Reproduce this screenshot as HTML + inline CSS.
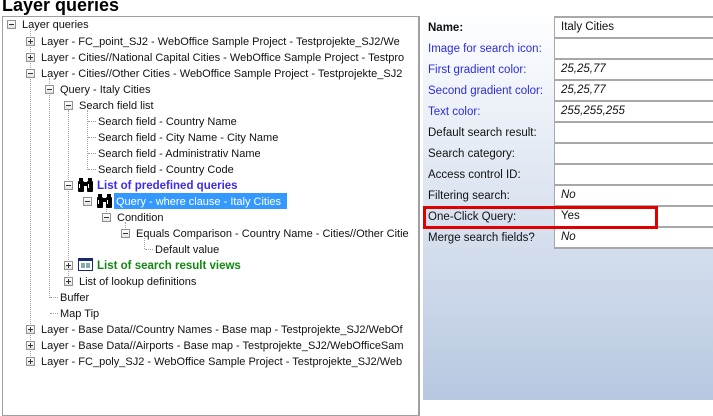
<!DOCTYPE html>
<html><head><meta charset="utf-8"><style>
*{margin:0;padding:0;box-sizing:border-box}
body{width:713px;height:400px;overflow:hidden;background:#fff;font-family:"Liberation Sans",Tahoma,sans-serif;font-size:11px;color:#111;position:relative}
.title{position:absolute;left:2px;top:-5px;font-size:18px;font-weight:bold;color:#000}
.tree{position:absolute;left:2px;top:16px;width:418px;height:400px;border:1px solid #a0a0a0;border-right:2px solid #a0a0a0;background:#fff}
.clip{position:absolute;left:0;top:0;width:418px;height:400px;overflow:hidden}
.r{position:absolute;white-space:nowrap;height:16px;line-height:16px;padding-top:1px}
.ex{position:absolute;width:9px;height:9px;border:1px solid #919191;background:linear-gradient(#fff,#e4e4e4)}
.ex:before{content:"";position:absolute;left:1px;top:3px;width:5px;height:1px;background:#333}
.ex.p:after{content:"";position:absolute;left:3px;top:1px;width:1px;height:5px;background:#333}
.vl{position:absolute;width:0;border-left:1px dotted #a0a0a0}
.hl{position:absolute;height:0;border-top:1px dotted #a0a0a0}
.sel{background:#3399ff;color:#fff;padding:1px 2px 0}
.prop{position:absolute;left:423px;top:16px;width:290px;height:384px;background:linear-gradient(#fdfeff,#b8c8e1)}
.lab{position:absolute;left:428px;white-space:nowrap;line-height:16px;font-size:11.5px;padding-top:1px}
.blue{color:#2b2bdc}
.cell{position:absolute;left:554px;width:159px;height:21px;background:#fff;border-left:1px solid #a8a8a8;border-top:2px solid #a8a8a8;padding-left:6px;line-height:19px;font-size:11.5px}
.it{font-style:italic}
.red{position:absolute;left:423px;top:206px;width:235px;height:23px;border:3px solid #e00000}
svg{position:absolute}
</style></head><body>
<div class="title">Layer queries</div>
<div class="tree"></div>
<div class="clip">
<div class="vl" style="left:30px;top:29px;height:333px"></div>
<div class="vl" style="left:49px;top:78px;height:220px"></div>
<div class="vl" style="left:68px;top:110px;height:170px"></div>
<div class="vl" style="left:87px;top:110px;height:60px"></div>
<div class="vl" style="left:106px;top:206px;height:12px"></div>
<div class="vl" style="left:125px;top:222px;height:12px"></div>
<div class="vl" style="left:144px;top:238px;height:11px"></div>
<div class="hl" style="left:88px;top:121px;width:8px"></div>
<div class="hl" style="left:88px;top:137px;width:8px"></div>
<div class="hl" style="left:88px;top:153px;width:8px"></div>
<div class="hl" style="left:88px;top:169px;width:8px"></div>
<div class="hl" style="left:145px;top:249px;width:8px"></div>
<div class="hl" style="left:50px;top:297px;width:8px"></div>
<div class="hl" style="left:50px;top:313px;width:8px"></div>

<div class="ex" style="left:7px;top:20px"></div><div class="r" style="left:22px;top:16px">Layer queries</div>
<div class="ex p" style="left:26px;top:37px"></div><div class="r" style="left:41px;top:33px">Layer - FC_point_SJ2 - WebOffice Sample Project - Testprojekte_SJ2/We</div>
<div class="ex p" style="left:26px;top:53px"></div><div class="r" style="left:41px;top:49px">Layer - Cities//National Capital Cities - WebOffice Sample Project - Testpro</div>
<div class="ex" style="left:26px;top:69px"></div><div class="r" style="left:41px;top:65px">Layer - Cities//Other Cities - WebOffice Sample Project - Testprojekte_SJ2</div>
<div class="ex" style="left:45px;top:85px"></div><div class="r" style="left:60px;top:81px">Query - Italy Cities</div>
<div class="ex" style="left:64px;top:101px"></div><div class="r" style="left:79px;top:97px">Search field list</div>
<div class="r" style="left:98px;top:113px">Search field - Country Name</div>
<div class="r" style="left:98px;top:129px">Search field - City Name - City Name</div>
<div class="r" style="left:98px;top:145px">Search field - Administrativ Name</div>
<div class="r" style="left:98px;top:161px">Search field - Country Code</div>
<div class="ex" style="left:64px;top:181px"></div>
<svg style="left:77px;top:178px" width="17" height="15" viewBox="0 0 17 15"><rect x="2" y="0" width="4" height="4" fill="#000"/><rect x="11" y="0" width="4" height="4" fill="#000"/><rect x="1" y="3" width="6" height="11" rx="1" fill="#000"/><rect x="10" y="3" width="6" height="11" rx="1" fill="#000"/><rect x="6" y="4" width="5" height="4" fill="#000"/><rect x="2" y="6" width="1" height="4" fill="#fff"/><rect x="11" y="6" width="1" height="4" fill="#fff"/></svg>
<div class="r" style="left:97px;top:177px;font-weight:bold;color:#3a2cf0;font-size:11.5px">List of predefined queries</div>
<div class="ex" style="left:83px;top:197px"></div>
<svg style="left:96px;top:194px" width="17" height="15" viewBox="0 0 17 15"><rect x="2" y="0" width="4" height="4" fill="#000"/><rect x="11" y="0" width="4" height="4" fill="#000"/><rect x="1" y="3" width="6" height="11" rx="1" fill="#000"/><rect x="10" y="3" width="6" height="11" rx="1" fill="#000"/><rect x="6" y="4" width="5" height="4" fill="#000"/><rect x="2" y="6" width="1" height="4" fill="#fff"/><rect x="11" y="6" width="1" height="4" fill="#fff"/></svg>
<div class="r sel" style="left:114px;top:193px;width:173px">Query - where clause - Italy Cities</div>
<div class="ex" style="left:102px;top:213px"></div><div class="r" style="left:117px;top:209px">Condition</div>
<div class="ex" style="left:121px;top:229px"></div><div class="r" style="left:136px;top:225px">Equals Comparison - Country Name - Cities//Other Citie</div>
<div class="r" style="left:155px;top:241px">Default value</div>
<div class="ex p" style="left:64px;top:261px"></div>
<div style="position:absolute;left:78px;top:258px;width:15px;height:13px;border:1px solid #1a2a70;background:#fff;border-top:3px solid #1a2a70"><div style="position:absolute;left:2px;top:2px;width:4px;height:5px;background:#8aa"></div><div style="position:absolute;left:7px;top:2px;width:4px;height:5px;background:#8aa"></div></div>
<div class="r" style="left:97px;top:257px;font-weight:bold;color:#118811;font-size:11.5px">List of search result views</div>
<div class="ex p" style="left:64px;top:277px"></div><div class="r" style="left:79px;top:273px">List of lookup definitions</div>
<div class="r" style="left:60px;top:289px">Buffer</div>
<div class="r" style="left:60px;top:305px">Map Tip</div>
<div class="ex p" style="left:26px;top:325px"></div><div class="r" style="left:41px;top:321px">Layer - Base Data//Country Names - Base map - Testprojekte_SJ2/WebOf</div>
<div class="ex p" style="left:26px;top:341px"></div><div class="r" style="left:41px;top:337px">Layer - Base Data//Airports - Base map - Testprojekte_SJ2/WebOfficeSam</div>
<div class="ex p" style="left:26px;top:357px"></div><div class="r" style="left:41px;top:353px">Layer - FC_poly_SJ2 - WebOffice Sample Project - Testprojekte_SJ2/Web</div>
</div>

<div class="prop"></div>
<div class="lab" style="top:19px;font-weight:bold">Name:</div>
<div class="lab blue" style="top:40px">Image for search icon:</div>
<div class="lab blue" style="top:61px">First gradient color:</div>
<div class="lab blue" style="top:82px">Second gradient color:</div>
<div class="lab blue" style="top:103px">Text color:</div>
<div class="lab" style="top:124px">Default search result:</div>
<div class="lab" style="top:145px">Search category:</div>
<div class="lab" style="top:166px">Access control ID:</div>
<div class="lab" style="top:187px">Filtering search:</div>
<div class="lab" style="top:208px">One-Click Query:</div>
<div class="lab" style="top:229px">Merge search fields?</div>

<div class="cell" style="top:16px">Italy Cities</div>
<div class="cell" style="top:37px"></div>
<div class="cell it" style="top:58px">25,25,77</div>
<div class="cell it" style="top:79px">25,25,77</div>
<div class="cell it" style="top:100px">255,255,255</div>
<div class="cell" style="top:121px"></div>
<div class="cell" style="top:142px"></div>
<div class="cell" style="top:163px"></div>
<div class="cell it" style="top:184px">No</div>
<div class="cell" style="top:205px">Yes</div>
<div class="cell it" style="top:226px;border-bottom:2px solid #a8a8a8;height:23px">No</div>
<div class="red"></div>
</body></html>
